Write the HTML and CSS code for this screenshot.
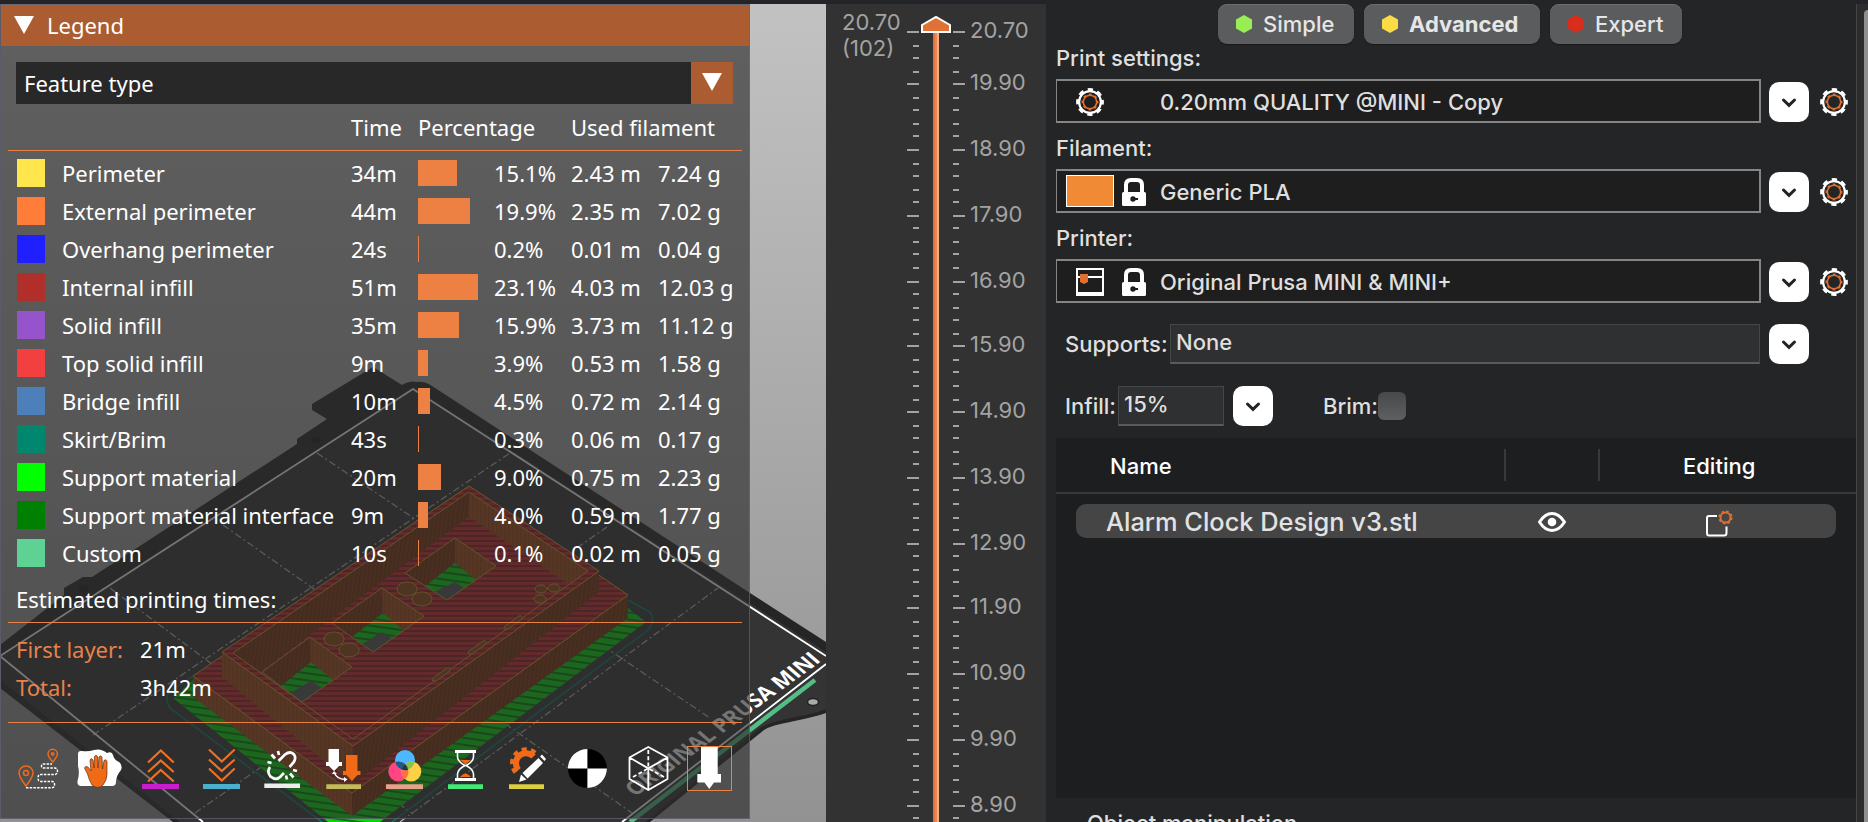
FILE: index.html
```html
<!DOCTYPE html>
<html lang="en">
<head>
<meta charset="utf-8">
<title>PrusaSlicer</title>
<link rel="stylesheet" href="styles.css">
</head>
<body>
<svg class="defs" width="0" height="0">
  <symbol id="gear" viewBox="0 0 28 28">
    <g fill="none">
      <circle cx="14" cy="14" r="10.9" stroke="#fff" stroke-width="2.2"/>
      <circle cx="14" cy="14" r="12.4" stroke="#fff" stroke-width="3" stroke-dasharray="5.2 4.54" stroke-dashoffset="2.6"/>
      <circle cx="14" cy="14" r="6.7" stroke="#e0702f" stroke-width="1.6"/>
      <circle cx="14" cy="14" r="7.6" stroke="#e0702f" stroke-width="1.6" stroke-dasharray="2.8 3.17" stroke-dashoffset="1.4"/>
    </g>
  </symbol>
  <symbol id="lock" viewBox="0 0 24 28">
    <path d="M4 15V7Q4 2 9 2H15Q20 2 20 7V15" fill="none" stroke="#fff" stroke-width="4"/>
    <rect x="0" y="14" width="24" height="14" rx="1.5" fill="#fff"/>
    <circle cx="11" cy="21" r="2.7" fill="#1e1e1e"/><path d="M11 20H16V22H11Z" fill="#1e1e1e"/>
  </symbol>
  <symbol id="chev" viewBox="0 0 40 40">
    <path d="M14.5 18L20 23.4L25.500 18" fill="none" stroke="#222326" stroke-width="3" stroke-linecap="round" stroke-linejoin="miter"/>
  </symbol>
</svg>
<div class="app">
  <main class="viewport">
    <svg class="scene" viewBox="0 4 826 818" width="826" height="818">
      <defs>
        <linearGradient id="bg" x1="0" y1="0" x2="0" y2="1"><stop offset="0" stop-color="#c2c2c2"/><stop offset="1" stop-color="#929292"/></linearGradient>
        <pattern id="red" width="8" height="5" patternUnits="userSpaceOnUse"><rect width="8" height="5" fill="#cc2a2e"/><rect width="8" height="2" fill="#8e1a20"/></pattern>
        <pattern id="grn" width="8" height="7" patternUnits="userSpaceOnUse" patternTransform="rotate(8)"><rect width="8" height="7" fill="#00d808"/><rect width="8" height="2" fill="#007a08"/></pattern>
        <pattern id="brL" width="4" height="6" patternUnits="userSpaceOnUse" patternTransform="rotate(8)"><rect width="4" height="6" fill="#84360c"/><rect width="1.500" height="6" fill="#6c2c0c"/></pattern>
        <pattern id="brM" width="4" height="4" patternUnits="userSpaceOnUse"><rect width="4" height="4" fill="#aa4c14"/><rect width="1.500" height="4" fill="#984414"/></pattern>
      </defs>
      <rect y="4" width="826" height="818" fill="url(#bg)"/>
      <path d="M373 367L402 385Q410 380 417 382Q424 381 432 386L750 593L826 642V713Q818 716 790 722Q772 725 764 730L650 822H173L0 688V645L64 595V588L83 577H92L297 444V439L327 419L312 410V404Z" fill="#252525"/>
      <path d="M413 387L826 652V709Q818 713 790 718Q770 722 760 728L645 822H180L0 680V655Z" fill="#343434"/>
      <ellipse cx="813" cy="702" rx="5.500" ry="3.500" fill="#aaa" stroke="#222" stroke-width="1.500"/>
      <path d="M312 436l8 2v4l-4 2l-4-2zM79 585l9 2v4l-4 2l-5-3z" fill="#1c1c1c"/>
      <g stroke="#b8b8b8" stroke-width="1.200" fill="none" stroke-dasharray="7 3 2 3">
        <path d="M93 735L510 453M195 813L607 527M400 822L718 588M317 453L710 718M223 525L632 813M110 588L413 814"/>
      </g>
      <path d="M826 656L413 389L0 656L203 822M826 664L622 822" fill="none" stroke="#fff" stroke-width="1.800"/>
      <path d="M815 680L630 822" stroke="#54bd85" stroke-width="4.500"/>
      <text class="bed-name" transform="matrix(.808 -.589 .76 .65 635 797)" textLength="231" lengthAdjust="spacingAndGlyphs">ORIGINAL PRUSA MINI</text>
      <!-- skirt and supports -->
      <path d="M322 822L170 708Q163 696 172 690L193 676M628 600L650 612Q656 620 648 630L392 822" fill="none" stroke="#007e6c" stroke-width="1.500"/>
      <path d="M193 680L173 698L328 822H380L646 622L628 608Z" fill="url(#grn)"/>
      <!-- base slab -->
      <path d="M193 676L352 793V816L193 697Z" fill="url(#brM)"/>
      <path d="M352 793L628 595V618L352 816Z" fill="url(#brL)"/>
      <path d="M193 676L469 486L628 595L352 793Z" fill="url(#red)" stroke="#d8a020" stroke-width="1"/>
      <!-- upper frame -->
      <path d="M222 652L353 746V784L222 677Z" fill="url(#brM)"/>
      <path d="M353 746L599 571V592L353 784Z" fill="url(#brL)"/>
      <path d="M222 652L469 486L599 571L353 746Z" fill="url(#red)" stroke="#d8a020" stroke-width="1"/>
      <path d="M233 653L469 492V517L260 672Z" fill="url(#brL)"/>
      <path d="M469 492L588 571L568 584L469 517Z" fill="url(#brM)"/>
      <path d="M260 672L469 517L568 584L353 739Z" fill="url(#red)"/>
      <path d="M233 653L469 492L588 571L353 739Z" fill="none" stroke="#c89c28" stroke-width="1"/>
      <!-- pockets -->
      <g id="pockets">
        <path d="M455 538L405 573L425 586L455 563Z" fill="url(#brL)"/><path d="M455 538L496 566L476 580L455 563Z" fill="url(#brM)"/>
        <path d="M455 563L476 580L447 600L425 586Z" fill="url(#grn)"/><path d="M455 582L464 588L447 600L434 592Z" fill="#555"/>
        <path d="M455 538L405 573L447 600L496 566Z" fill="none" stroke="#c89c28"/>
        <path d="M382 588L332 623L352 637L383 613Z" fill="url(#brL)"/><path d="M382 588L424 616L404 631L383 613Z" fill="url(#brM)"/>
        <path d="M383 613L404 631L373 652L352 637Z" fill="url(#grn)"/><path d="M382 632L392 639L373 652L362 644Z" fill="#555"/>
        <path d="M382 588L332 623L373 652L424 616Z" fill="none" stroke="#c89c28"/>
        <path d="M310 637L262 672L281 686L311 662Z" fill="url(#brL)"/><path d="M310 637L352 667L333 680L311 662Z" fill="url(#brM)"/>
        <path d="M311 662L333 680L302 702L281 686Z" fill="url(#grn)"/><path d="M311 681L322 688L302 702L290 693Z" fill="#555"/>
        <path d="M310 637L262 672L302 702L352 667Z" fill="none" stroke="#c89c28"/>
      </g>
      <g fill="#8e4812" stroke="#c89c28" stroke-width="1">
        <ellipse cx="334" cy="639" rx="10" ry="7"/><ellipse cx="349" cy="650" rx="10" ry="7"/>
        <ellipse cx="407" cy="589" rx="10" ry="7"/><ellipse cx="422" cy="599" rx="10" ry="7"/>
        <ellipse cx="541" cy="589" rx="6" ry="4"/><ellipse cx="554" cy="588" rx="6" ry="4"/><ellipse cx="540" cy="599" rx="6" ry="4"/>
        <path d="M504 627l15-11q4-1 3 3l-14 10q-4 1-4-2zM468 652l15-11q4-1 3 3l-14 10q-4 1-4-2zM432 679l15-11q4-1 3 3l-14 10q-4 1-4-2z"/>
      </g>
    </svg>
    <section class="legend">
      <header class="legend-title"><svg width="20" height="18"><path d="M0 0H20L10 18Z" fill="#fff"/></svg><span>Legend</span></header>
      <div class="combo"><span>Feature type</span><div class="combo-btn"><svg width="20" height="18"><path d="M0 0H20L10 18Z" fill="#fff"/></svg></div></div>
      <div class="row head"><span></span><span></span><span>Time</span><span class="span2">Percentage</span><span class="span2">Used filament</span></div>
      <div class="features" id="features"></div>
      <div class="est">Estimated printing times:</div>
      <div class="times">
        <span class="key">First layer:</span><span>21m</span>
        <span class="key">Total:</span><span>3h42m</span>
      </div>
      <div class="tools">
        <svg viewBox="0 0 45 45"><g fill="none" stroke="#ee6a1e" stroke-width="1.500"><path d="M10 40Q3 31 3 27A7 7 0 0 1 17 27Q17 31 10 40Z"/><circle cx="10" cy="27" r="2.500"/><path d="M36.700 16Q32 10.500 32 8A4.700 4.700 0 0 1 41.400 8Q41.400 10.500 36.700 16Z"/><circle cx="36.700" cy="8" r="1.200"/></g><path d="M10 41.700H36Q38.500 41.700 38.500 39V38Q38.500 35.500 36 35.500H25Q22 35.500 22 32Q22 28.500 25 28.500H39Q41.500 28 41.500 25Q41.500 22.500 39 22H28Q25.500 22 25.500 20Q25.500 18 28 18H36" fill="none" stroke="#fff" stroke-width="1.400" stroke-dasharray="2.500 1.200"/></svg>
        <svg viewBox="0 0 45 45"><path d="M1 8Q1 4.500 5 5Q11 6 17 4Q24 2 30 7Q35 5 36 9Q37 14 42 16Q46 19 44 24Q39 30 39 36Q39 40 35 40H4Q0 40 .5 35Q3 27 1 20Z" fill="#fff"/><path d="M15 39Q12 34 10.500 28L7.500 22Q8 19.500 11 21L14 25L13 14Q14 11 16 14L17 22L17.500 10.500Q19 8 20.500 10.500L21 22L22 11Q24 8.500 25 11.500L25.500 23L27 14.500Q29 12.500 30 15.500V28Q30 34 26 39Q21 44 15 39Z" fill="#f06a18" stroke="#5c3018" stroke-width=".7"/></svg>
        <svg viewBox="0 0 45 45"><path d="M10 16.500L22.800 4.500L35.700 16.500M10 26L22.800 14.500L35.700 26M10 35.500L22.800 24L35.700 35.500" fill="none" stroke="#f07020" stroke-width="2.200"/><path d="M4 38H41V43H4Z" fill="#c91ccf"/></svg>
        <svg viewBox="0 0 45 45"><path d="M10 3.500L22.800 15.500L35.700 3.500M10 13.500L22.800 25L35.700 13.500M10 22.500L22.800 34.500L35.700 22.500" fill="none" stroke="#f07020" stroke-width="2.200"/><path d="M4 38H41V43H4Z" fill="#4ab0cc"/></svg>
        <svg viewBox="0 0 45 45"><path d="M18.500 15L25 8.500Q30.500 4.500 34 8.500Q36.500 12 33.500 16.500L29.500 21M10 21Q6.500 26 10.500 30.500Q16 35 20 31L24 27M18 5L19 9M11.500 8.500L15 12.500M7.500 16L11.500 17M26 29.500L27 33.500M30 27.500L33.500 31.500M33 24L37 25" fill="none" stroke="#fff" stroke-width="2.700"/><path d="M4.300 37.500H40V42H4.300Z" fill="#ededed"/></svg>
        <svg viewBox="0 0 45 45"><path d="M7.500 3H18V16H21V20H18L13 25L8 20H5V16H7.500Z" fill="#fff"/><path d="M25 9H36.500V25H39.500V29H36.500L31 35L25.500 29H22V25H25Z" fill="#f06a18"/><path d="M13.300 27Q16 33 24 33.500" fill="none" stroke="#fff" stroke-width="1.400"/><path d="M11 28L13 25L16 28ZM23 31L26.500 33.500L23 36Z" fill="#fff"/><path d="M5.300 38.300H40V43H5.300Z" fill="#c2bb59"/></svg>
        <svg viewBox="0 0 45 45"><circle cx="23" cy="14" r="10" fill="#4db8ff"/><circle cx="16.300" cy="25.500" r="10" fill="#ff4582"/><circle cx="29.300" cy="25.500" r="10" fill="#ffd044"/><path d="M13.300 16A10 10 0 0 1 23 18A10 10 0 0 1 22.500 24A10 10 0 0 1 13.300 16Z" fill="#1e5b86"/><path d="M32.700 16A10 10 0 0 0 23 18A10 10 0 0 0 23 24A10 10 0 0 0 32.700 16Z" fill="#8bc34a"/><path d="M23 18A10 10 0 0 1 23 33A10 10 0 0 1 23 18Z" fill="#ff7043"/><path d="M23 18Q26 21 26 24Q23 24.500 19.500 23.500Q20 20 23 18Z" fill="#153c52"/><path d="M4 38.300H41V43H4Z" fill="#e6a08c"/></svg>
        <svg viewBox="0 0 45 45"><path d="M12 5.500H33M12 33.500H33" stroke="#fff" stroke-width="3"/><path d="M14.500 6V11Q15 16 22 19.500Q15 23 14.500 28V33M30.500 6V11Q30 16 23 19.500Q30 23 30.500 28V33" fill="none" stroke="#fff" stroke-width="1.600"/><path d="M17 14H28L22.500 18.500ZM17 31Q22.500 24 28 31Z" fill="#f06a18"/><path d="M5 38.300H40V43H5Z" fill="#42ea75"/></svg>
        <svg viewBox="0 0 45 45"><g fill="none" stroke="#f06a18"><path d="M14.500 24A9.800 9.800 0 1 1 29.500 10.500" stroke-width="6"/><path d="M11.500 26.500A13.800 13.800 0 1 1 32.500 8" stroke-width="4" stroke-dasharray="5 4.200"/></g><path d="M15 36L17 28.500L22.500 33.500ZM18.500 27L34.500 12L39 17L23.500 32.500ZM36 10.500L38 8.500L42 13L40.500 15Z" fill="#fff"/><path d="M5 38.300H40V43H5Z" fill="#dccf3d"/></svg>
        <svg viewBox="0 0 45 45"><circle cx="22.400" cy="22.400" r="19.500" fill="#000"/><path d="M22.400 22.400V2.900A19.500 19.500 0 0 0 2.900 22.400ZM22.400 22.400V41.900A19.500 19.500 0 0 0 41.900 22.400Z" fill="#fff"/></svg>
        <svg viewBox="0 0 45 45"><g fill="none" stroke="#fff" stroke-width="1.800" stroke-linejoin="round"><path d="M22.300 1L41.500 11.500V33L22.300 44L3.500 33V11.500ZM3.500 11.500L22.300 22.400L41.500 11.500M22.300 22.400V44"/><path d="M22.300 4V22M7 31L22 22.500M38 31L22.500 22.500" stroke-dasharray="4 2.300"/></g></svg>
        <svg viewBox="0 0 45 45" class="active"><path d="M14 1H30.700V28H34V36.500H27L22.300 43L17.500 36.500H10.300V28H14Z" fill="#fff"/></svg>
      </div>
    </section>
  </main>
  <aside class="slider">
    <svg id="ruler" viewBox="826 4 220 818" width="220" height="818">
      <path id="ticks" fill="#a3a3a3"/>
      <rect x="933" y="32" width="2" height="790" fill="#e0733a"/><rect x="935" y="32" width="2" height="790" fill="#ee854c"/><rect x="937" y="32" width="2" height="790" fill="#f6ae8a"/>
      <path d="M922 32V25L936 17L950 25V32Z" fill="#e07236" stroke="#fff" stroke-width="2"/>
      <g id="labels" class="ruler-text"><text x="842" y="30">20.70</text><text x="842" y="56">(102)</text></g>
    </svg>
  </aside>
  <aside class="side">
    <div class="modes">
      <div class="mode simple"><svg width="16" height="18"><path d="M8 0L16 4.500V13.500L8 18L0 13.500V4.500Z" fill="#99ee55"/></svg><span>Simple</span></div>
      <div class="mode adv"><svg width="16" height="18"><path d="M8 0L16 4.500V13.500L8 18L0 13.500V4.500Z" fill="#fbdc47"/></svg><span>Advanced</span></div>
      <div class="mode exp"><svg width="16" height="18"><path d="M8 0L16 4.500V13.500L8 18L0 13.500V4.500Z" fill="#d92d1c"/></svg><span>Expert</span></div>
    </div>
    <label class="cap first">Print settings:</label>
    <div class="preset"><div class="box"><svg class="g1" width="28" height="28"><use href="#gear"/></svg><span>0.20mm QUALITY @MINI - Copy</span></div><svg class="drop"><use href="#chev"/></svg><svg width="28" height="28"><use href="#gear"/></svg></div>
    <label class="cap">Filament:</label>
    <div class="preset"><div class="box"><i class="swatch-fil"></i><svg class="lk" width="24" height="28"><use href="#lock"/></svg><span>Generic PLA</span></div><svg class="drop"><use href="#chev"/></svg><svg width="28" height="28"><use href="#gear"/></svg></div>
    <label class="cap">Printer:</label>
    <div class="preset"><div class="box"><svg class="g1 pr" width="28" height="28" viewBox="0 0 28 28"><path d="M1 1H27V27H1ZM1 9H27" fill="none" stroke="#fff" stroke-width="2"/><path d="M0 24H28V28H0Z" fill="#fff"/><path d="M4 6H12V14L8 16L4 14Z" fill="#e0702f"/></svg><svg class="lk" width="24" height="28"><use href="#lock"/></svg><span>Original Prusa MINI &amp; MINI+</span></div><svg class="drop"><use href="#chev"/></svg><svg width="28" height="28"><use href="#gear"/></svg></div>
    <div class="opt supports"><span class="lbl">Supports:</span><div class="field">None</div><svg class="drop"><use href="#chev"/></svg></div>
    <div class="opt infill"><span class="lbl">Infill:</span><div class="field">15%</div><svg class="drop"><use href="#chev"/></svg><span class="brim">Brim:</span><i class="check"></i></div>
    <div class="objects">
      <div class="thead"><span class="c1">Name</span><span class="c2"></span><span class="c3">Editing</span></div>
      <div class="item"><span class="c1">Alarm Clock Design v3.stl</span>
        <svg class="eye" width="28" height="20" viewBox="0 0 28 20"><path d="M1.500 10Q7 1.500 14 1.500T26.500 10Q21 18.500 14 18.500T1.500 10Z" fill="none" stroke="#fff" stroke-width="3"/><circle cx="14" cy="10" r="4.300" fill="#fff"/></svg>
        <svg class="edit" width="27" height="27" viewBox="0 0 27 27"><path d="M11 6H3Q1 6 1 8V23Q1 25.500 3 25.500H18Q20.500 25.500 20.500 23V16.500" fill="none" stroke="#fff" stroke-width="2"/><circle cx="19.500" cy="7.500" r="5" fill="none" stroke="#e0702f" stroke-width="2"/><circle cx="19.500" cy="7.500" r="6.300" fill="none" stroke="#e0702f" stroke-width="1.500" stroke-dasharray="2.600 2.350"/></svg>
      </div>
    </div>
    <div class="manip">Object manipulation</div>
  </aside>
  <aside class="scroll"><i></i></aside>
</div>
<script src="script.js"></script>
</body>
</html>
```
FILE: styles.css
```css
* { box-sizing: border-box; }
body { margin: 0; width: 1868px; height: 822px; overflow: hidden; background: #222427; font-family: Inter, "Liberation Sans", sans-serif; }
.defs { position: absolute; }
.app { display: grid; grid-template-columns: 826px 220px 810px 12px; height: 822px; overflow: hidden; }
svg { display: block; flex: none; }

.viewport { margin-top: 4px; height: 818px; display: grid; overflow: hidden; }
.scene, .legend { grid-area: 1 / 1; }
.bed-name { font: bold 22px "Open Sans", "Noto Sans", sans-serif; fill: #fff; }

.legend { width: 750px; height: 815px; z-index: 1; background: rgba(43, 43, 43, .65); border: 1px solid rgba(110, 110, 128, .6); border-left: 1px solid #5c5c66; font: 22px/38px "Noto Sans", sans-serif; color: #fff; }
.legend-title { height: 41px; background: #ab5c30; display: flex; align-items: center; padding-left: 13px; }
.legend-title svg { margin-top: -2px; }
.legend-title span { margin-left: 13px; padding-bottom: 2px; }
.combo { margin: 16px 16px 0 15px; height: 42px; background: #282828; display: flex; justify-content: space-between; align-items: center; padding-left: 8px; }
.combo-btn { width: 42px; height: 42px; background: #ab5c30; display: grid; place-content: center; padding-bottom: 2px; }
.row { display: grid; grid-template-columns: 45px 289px 67px 76px 77px 87px 1fr; height: 38px; padding-left: 16px; align-items: center; white-space: nowrap; }
.span2 { grid-column: span 2; }
.head { height: 47px; margin: 0 7px; padding: 0 0 0 9px; border-bottom: 1px solid #ea8144; }
.features { padding-top: 3px; }
.sw { width: 28px; height: 28px; }
.bar { height: 26px; background: #ed8144; }
.est { height: 51px; line-height: 48px; margin: 0 7px; padding: 3px 0 0 8px; border-bottom: 1px solid #ea8144; }
.times { height: 100px; margin: 0 7px; padding: 7px 0 0 8px; border-bottom: 1px solid #ea8144; display: grid; grid-template-columns: 124px 1fr; grid-auto-rows: 38px; align-content: start; }
.key { color: #e8824a; }
.tools { display: flex; gap: 16px; padding: 23px 0 0 15px; }
.tools svg { width: 45px; height: 45px; }
.active { outline: 1px solid #ed8144; outline-offset: -1px; }

.slider { margin-top: 4px; background: #323232; }
.ruler-text { font: 22px Inter, sans-serif; fill: #a3a3a3; }

.side { background: #242527; padding-left: 10px; color: #dfdfdf; font-size: 22px; font-weight: 450; height: 822px; overflow: hidden; }
.modes { display: flex; gap: 10px; padding: 4px 0 0 162px; }
.mode { height: 40px; border-radius: 9px; background: #5b5c5e; box-shadow: inset 0 1px #6c6d6f, 0 1px 1px #18191a; display: flex; align-items: center; padding-left: 18px; gap: 11px; color: #e6e6e6; }
.simple { width: 136px; }
.adv { width: 176px; font-weight: 700; }
.exp { width: 132px; }
.cap { display: block; margin-top: 11px; height: 35px; line-height: 28px; }
.first { margin-top: 0; }
.preset { display: flex; align-items: center; height: 44px; }
.box { width: 705px; height: 44px; border: 2px solid #858585; border-left-width: 1px; background: #1e1e1e; display: flex; align-items: center; padding-left: 9px; white-space: nowrap; }
.box span { padding-top: 2px; }
.g1 { margin: 0 56px 0 10px; }
.pr { margin-right: 18px; }
.lk { margin-right: 14px; }
.box svg, .preset > svg:last-child { margin-top: 2px; }
.swatch-fil { width: 48px; height: 32px; background: #f08a35; border: 1px solid #fff; margin-right: 8px; }
.drop { width: 40px; height: 40px; border-radius: 10px; background: #fff; margin: 0 11px 0 8px; }
.preset .drop { margin-top: 2px; }
.opt { display: flex; align-items: center; height: 40px; padding-left: 9px; }
.supports { margin-top: 21px; }
.infill { margin-top: 22px; }
.lbl { width: 105px; }
.infill .lbl { width: 53px; }
.field { width: 590px; height: 40px; padding-left: 5px; line-height: 34px; background: #2f3032; border: 1px solid #454648; border-bottom: 2px solid #5a5b5d; }
.infill .field { width: 106px; }
.opt .drop { margin: 0 0 0 9px; }
.brim { margin-left: 50px; width: 55px; }
.check { width: 28px; height: 28px; border-radius: 6px; background: linear-gradient(#48494b, #5e5f61); }
.objects { margin-top: 12px; height: 360px; background: #1d1e20; }
.thead { height: 56px; border-bottom: 2px solid #39393c; display: flex; align-items: center; color: #fff; font-weight: 500; }
.thead .c1 { padding-left: 54px; width: 448px; }
.thead .c2 { width: 96px; height: 32px; border: solid #39393c; border-width: 0 2px; }
.thead .c3 { padding-left: 83px; }
.thead .c1, .thead .c3 { padding-top: 1px; }
.item { margin: 10px 20px 0; height: 34px; border-radius: 10px; background: #454545; display: flex; align-items: center; padding-left: 30px; font-size: 25.4px; color: #e2e2e2; white-space: nowrap; }
.item .c1 { width: 432px; }
.eye { margin-top: 2px; }
.edit { margin-left: 140px; margin-top: 4px; }
.manip { margin: 10px 0 0 31px; line-height: 30px; font-weight: 500; }
.scroll { margin-top: 4px; background: #2c2c2d; border-left: 1px solid #454545; display: flex; justify-content: flex-end; padding-top: 6px; }
.scroll i { width: 4px; height: 812px; background: #8f8f8f; border-top-left-radius: 5px; }
```
FILE: script.js
```js
// Feature rows: colour, name, time, bar width, share, length, weight
const rows = [
  ['#ffe64d', 'Perimeter', '34m', 39, '15.1%', '2.43 m', '7.24 g'],
  ['#ff7d38', 'External perimeter', '44m', 52, '19.9%', '2.35 m', '7.02 g'],
  ['#1f1fff', 'Overhang perimeter', '24s', 1, '0.2%', '0.01 m', '0.04 g'],
  ['#b03029', 'Internal infill', '51m', 60, '23.1%', '4.03 m', '12.03 g'],
  ['#9654cc', 'Solid infill', '35m', 41, '15.9%', '3.73 m', '11.12 g'],
  ['#f24040', 'Top solid infill', '9m', 10, '3.9%', '0.53 m', '1.58 g'],
  ['#4d80ba', 'Bridge infill', '10m', 12, '4.5%', '0.72 m', '2.14 g'],
  ['#00876e', 'Skirt/Brim', '43s', 1, '0.3%', '0.06 m', '0.17 g'],
  ['#00ff00', 'Support material', '20m', 23, '9.0%', '0.75 m', '2.23 g'],
  ['#008000', 'Support material interface', '9m', 10, '4.0%', '0.59 m', '1.77 g'],
  ['#5ed194', 'Custom', '10s', 1, '0.1%', '0.02 m', '0.05 g']
];
document.getElementById('features').innerHTML = rows.map(r =>
  `<div class="row"><i class="sw" style="background:${r[0]}"></i><span>${r[1]}</span><span>${r[2]}</span><i class="bar" style="width:${r[3]}px"></i><span>${r[4]}</span><span>${r[5]}</span><span>${r[6]}</span></div>`
).join('');

// Layer ruler: one tick per 0.2 mm layer, labelled every millimetre
let d = '', labels = '';
for (let i = 0; i <= 60; i++) {
  const y = 2 * Math.round((32 + 13.11 * i) / 2);
  const major = i === 0 || i % 5 === 4;
  d += major ? `M907 ${y - 1}h12v2h-12zM953 ${y - 1}h12v2h-12z` : `M913 ${y - 1}h6v2h-6zM953 ${y - 1}h6v2h-6z`;
  if (major) labels += `<text x="970" y="${y + 6}">${(20.7 - 0.2 * i).toFixed(2)}</text>`;
}
document.getElementById('ticks').setAttribute('d', d);
document.getElementById('labels').innerHTML += labels;
```
